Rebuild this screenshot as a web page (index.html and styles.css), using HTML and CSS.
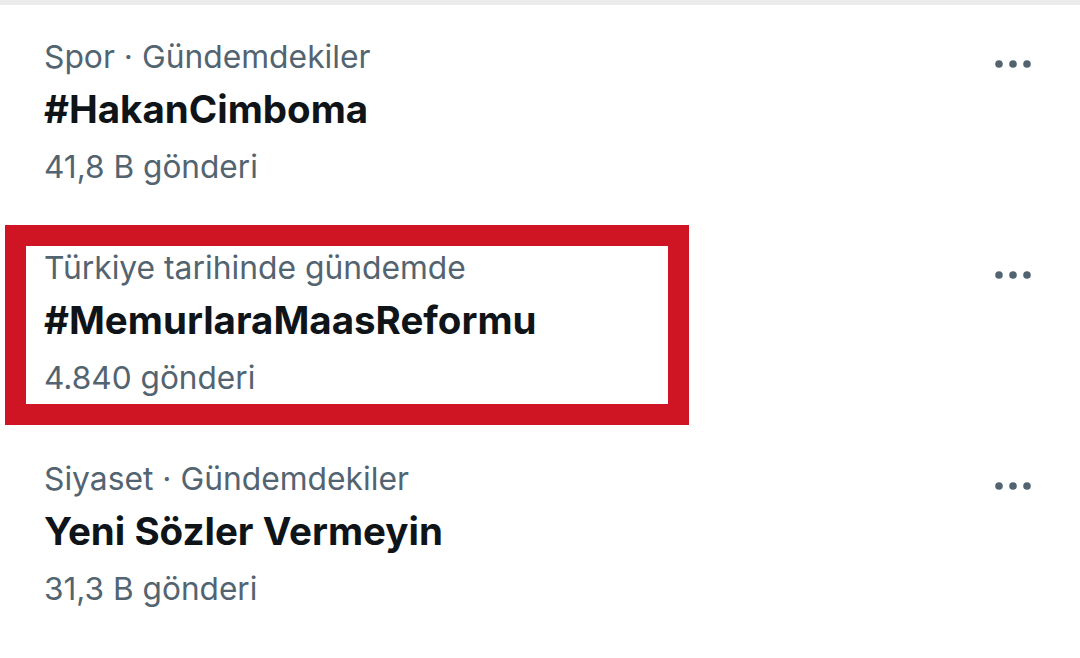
FILE: index.html
```html
<!DOCTYPE html>
<html lang="tr">
<head>
<meta charset="utf-8">
<link rel="stylesheet" href="styles.css">
</head>
<body>
<div class="topbar"></div>
<div class="list">
  <div class="trend">
    <div class="text">
      <div class="meta">Spor · Gündemdekiler</div>
      <div class="title">#HakanCimboma</div>
      <div class="count">41,8 B gönderi</div>
    </div>
    <svg class="more" width="36" height="8" viewBox="0 0 36 8"><circle cx="4" cy="4" r="3.8"/><circle cx="18" cy="4" r="3.8"/><circle cx="32" cy="4" r="3.8"/></svg>
  </div>
  <div class="trend">
    <div class="text">
      <div class="meta">Türkiye tarihinde gündemde</div>
      <div class="title">#MemurlaraMaasReformu</div>
      <div class="count">4.840 gönderi</div>
    </div>
    <svg class="more" width="36" height="8" viewBox="0 0 36 8"><circle cx="4" cy="4" r="3.8"/><circle cx="18" cy="4" r="3.8"/><circle cx="32" cy="4" r="3.8"/></svg>
    <div class="highlight"></div>
  </div>
  <div class="trend">
    <div class="text">
      <div class="meta">Siyaset · Gündemdekiler</div>
      <div class="title">Yeni Sözler Vermeyin</div>
      <div class="count">31,3 B gönderi</div>
    </div>
    <svg class="more" width="36" height="8" viewBox="0 0 36 8"><circle cx="4" cy="4" r="3.8"/><circle cx="18" cy="4" r="3.8"/><circle cx="32" cy="4" r="3.8"/></svg>
  </div>
</div>
</body>
</html>
```
FILE: styles.css
```css
html, body {
  margin: 0;
  padding: 0;
  background: #ffffff;
}
body {
  width: 1080px;
  height: 658px;
  overflow: hidden;
  font-family: Inter, Roboto, "Noto Sans", "Liberation Sans", sans-serif;
}
.topbar {
  height: 5px;
  background: #ebebeb;
}
.list {
  padding-top: 24px;
}
.trend {
  position: relative;
  display: flex;
  justify-content: space-between;
  align-items: flex-start;
  height: 211px;
  padding-left: 44px;
  padding-right: 49px;
}
.text {
  display: flex;
  flex-direction: column;
}
.meta {
  font-size: 31.8px;
  line-height: 55px;
  color: #536471;
}
.count {
  font-size: 31.6px;
  line-height: 55px;
  color: #536471;
}
.title {
  font-size: 38.5px;
  line-height: 51px;
  margin-bottom: 4px;
  font-weight: 700;
  color: #0f1419;
}
.more {
  margin-top: 31px;
  fill: #536471;
}
.highlight {
  position: absolute;
  left: 5px;
  top: -15px;
  width: 642px;
  height: 158px;
  border: 21px solid #cf1424;
}
```
